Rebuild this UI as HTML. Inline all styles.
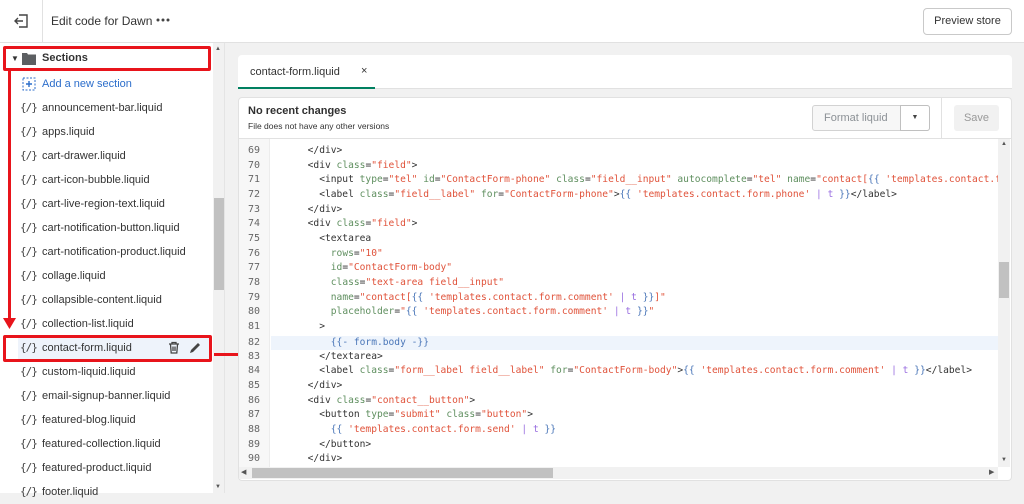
<!DOCTYPE html>
<html><head><meta charset="utf-8"><style>
*{margin:0;padding:0;box-sizing:border-box}
body{width:1024px;height:493px;overflow:hidden;background:#f1f1f1;font-family:"Liberation Sans",sans-serif;position:relative;color:#303030}
.a{position:absolute}
.top{left:0;top:0;width:1024px;height:43px;background:#fff;border-bottom:1px solid #e1e1e1}
.side{left:0;top:43px;width:213px;height:450px;background:#fff}
.sb{left:213px;top:43px;width:12px;height:450px;background:#f1f1f1;border-right:1px solid #e4e4e4}
.item{position:absolute;left:20px;font-size:11px;color:#333;height:24px;line-height:24px;white-space:nowrap}
.item i{font-style:normal;font-family:"DejaVu Sans Mono",monospace;font-size:11px;color:#444;display:inline-block;width:22px;letter-spacing:-1px}
.code{font-family:"DejaVu Sans Mono",monospace;font-size:10px;white-space:pre;color:#333}
.ln{position:absolute;left:238px;width:22px;text-align:right;color:#666;font-family:"DejaVu Sans Mono",monospace;font-size:10px}
.clip{position:absolute;left:271px;top:139px;width:727px;height:328px;overflow:hidden;font-size:9.6px}
.cl{position:absolute;left:2px;margin-top:-139px}
.g{color:#5f8f5f}.s{color:#e0533b}.p{color:#9a6fe0}.b{color:#4a76b8}
.red{border:3px solid #e8141b;border-radius:2px}
</style></head><body>
<div class="a top"></div>
<svg class="a" style="left:13px;top:13px" width="16" height="16" viewBox="0 0 16 16"><path d="M6 2H14V14H6M2 8H10M5 5L2 8L5 11" fill="none" stroke="#444" stroke-width="1.4"/></svg>
<div class="a" style="left:42px;top:0;width:1px;height:43px;background:#e1e1e1"></div>
<div class="a" style="left:51px;top:14px;font-size:12px;color:#333">Edit code for Dawn</div>
<svg class="a" style="left:156px;top:18px" width="14" height="4"><circle cx="2" cy="2" r="1.5" fill="#444"/><circle cx="7" cy="2" r="1.5" fill="#444"/><circle cx="12" cy="2" r="1.5" fill="#444"/></svg>
<div class="a" style="left:923px;top:8px;width:89px;height:27px;border:1px solid #c9c9c9;border-radius:4px;background:#fff;font-size:11px;text-align:center;line-height:25px;color:#333">Preview store</div>

<div class="a side"></div>
<div class="a sb"><div class="a" style="left:1px;top:155px;width:10px;height:92px;background:#c1c1c1"></div></div>
<div class="a" style="left:215px;top:46px;font-size:6px;color:#555">▲</div>
<div class="a" style="left:215px;top:484px;font-size:6px;color:#555">▼</div>

<div class="a" style="left:11px;top:54px;font-size:8px;color:#333">▼</div>
<svg class="a" style="left:22px;top:52px" width="14" height="13" viewBox="0 0 14 13"><path d="M0 1H5L6 2.5H14V13H0Z" fill="#5c5f62"/></svg>
<div class="a" style="left:42px;top:52px;font-size:11px;font-weight:bold;color:#333">Sections</div>
<div class="a red" style="left:3px;top:46px;width:208px;height:25px"></div>

<svg class="a" style="left:22px;top:77px" width="14" height="14"><rect x="1" y="1" width="12" height="12" fill="none" stroke="#2c6ecb" stroke-dasharray="2 1.5"/><path d="M7 4V10M4 7H10" stroke="#2c6ecb" stroke-width="1.4"/></svg>
<div class="a" style="left:42px;top:78px;font-size:11px;color:#2c6ecb">Add a new section</div>

<div class="a" style="left:18px;top:336px;width:193px;height:24px;background:#eef3fb"></div>
<div class="item" style="top:96px"><i>{/}</i>announcement-bar.liquid</div>
<div class="item" style="top:120px"><i>{/}</i>apps.liquid</div>
<div class="item" style="top:144px"><i>{/}</i>cart-drawer.liquid</div>
<div class="item" style="top:168px"><i>{/}</i>cart-icon-bubble.liquid</div>
<div class="item" style="top:192px"><i>{/}</i>cart-live-region-text.liquid</div>
<div class="item" style="top:216px"><i>{/}</i>cart-notification-button.liquid</div>
<div class="item" style="top:240px"><i>{/}</i>cart-notification-product.liquid</div>
<div class="item" style="top:264px"><i>{/}</i>collage.liquid</div>
<div class="item" style="top:288px"><i>{/}</i>collapsible-content.liquid</div>
<div class="item" style="top:312px"><i>{/}</i>collection-list.liquid</div>
<div class="item" style="top:336px"><i>{/}</i>contact-form.liquid</div>
<div class="item" style="top:360px"><i>{/}</i>custom-liquid.liquid</div>
<div class="item" style="top:384px"><i>{/}</i>email-signup-banner.liquid</div>
<div class="item" style="top:408px"><i>{/}</i>featured-blog.liquid</div>
<div class="item" style="top:432px"><i>{/}</i>featured-collection.liquid</div>
<div class="item" style="top:456px"><i>{/}</i>featured-product.liquid</div>
<div class="item" style="top:480px"><i>{/}</i>footer.liquid</div>
<svg class="a" style="left:167px;top:341px" width="36" height="14"><path d="M2 3H12M5 3V1.5H9V3M3.5 3.5L4.2 12H9.8L10.5 3.5M6 5.5V10M8 5.5V10" fill="none" stroke="#444" stroke-width="1.3"/><path d="M23 12L24 9L31 2L33 4L26 11Z" fill="#444"/></svg>
<div class="a red" style="left:3px;top:335px;width:209px;height:27px"></div>

<div class="a" style="left:8px;top:70px;width:3px;height:254px;background:#e8141b"></div>
<svg class="a" style="left:3px;top:318px" width="13" height="12"><path d="M0 0H13L6.5 11Z" fill="#e8141b"/></svg>
<div class="a" style="left:214px;top:353px;width:46px;height:3px;background:#e8141b"></div>
<svg class="a" style="left:258px;top:348px" width="12" height="13"><path d="M0 0L12 6.5L0 13Z" fill="#e8141b"/></svg>

<div class="a" style="left:238px;top:55px;width:774px;height:34px;background:#fff;border-radius:4px 4px 0 0;border-bottom:1px solid #e1e1e1"></div>
<div class="a" style="left:250px;top:66px;font-size:11px;color:#333">contact-form.liquid</div>
<div class="a" style="left:361px;top:65px;font-size:11px;color:#333">×</div>
<div class="a" style="left:238px;top:87px;width:137px;height:2px;background:#008060"></div>

<div class="a" style="left:238px;top:97px;width:774px;height:384px;background:#fff;border-radius:4px;border:1px solid #e1e1e1"></div>
<div class="a" style="left:248px;top:105px;font-size:11px;font-weight:bold;color:#303030">No recent changes</div>
<div class="a" style="left:248px;top:121px;font-size:8.5px;color:#333">File does not have any other versions</div>
<div class="a" style="left:812px;top:105px;width:118px;height:26px;border:1px solid #d2d2d2;border-radius:3px;background:#f7f7f7"></div>
<div class="a" style="left:900px;top:105px;width:30px;height:26px;border:1px solid #c0c0c0;border-radius:0 3px 3px 0;background:#fff;font-size:7px;text-align:center;line-height:24px;color:#444">▼</div>
<div class="a" style="left:824px;top:112px;font-size:11px;color:#8c9196">Format liquid</div>
<div class="a" style="left:941px;top:97px;width:1px;height:41px;background:#e1e1e1"></div>
<div class="a" style="left:954px;top:105px;width:45px;height:26px;border-radius:3px;background:#f1f1f1;font-size:11px;color:#999;text-align:center;line-height:26px">Save</div>
<div class="a" style="left:239px;top:138px;width:772px;height:1px;background:#e1e1e1"></div>

<div class="a" style="left:239px;top:139px;width:31px;height:328px;background:#f7f7f7;border-right:1px solid #ececec"></div>
<div class="a" style="left:271px;top:336px;width:727px;height:14px;background:#eef4fc"></div>
<div class="a" style="left:998px;top:139px;width:12px;height:328px;background:#f1f1f1"><div class="a" style="left:1px;top:123px;width:10px;height:36px;background:#c1c1c1"></div></div>
<div class="a" style="left:1001px;top:141px;font-size:6px;color:#555">▲</div>
<div class="a" style="left:1001px;top:457px;font-size:6px;color:#555">▼</div>
<div class="a" style="left:239px;top:467px;width:759px;height:12px;background:#f1f1f1"><div class="a" style="left:13px;top:1px;width:301px;height:10px;background:#c1c1c1"></div></div>
<div class="a" style="left:241px;top:468px;font-size:7px;color:#555">◀</div>
<div class="a" style="left:989px;top:468px;font-size:7px;color:#555">▶</div>

<div class="code">
<div class="ln" style="top:145px">69</div>
<div class="ln" style="top:160px">70</div>
<div class="ln" style="top:174px">71</div>
<div class="ln" style="top:189px">72</div>
<div class="ln" style="top:204px">73</div>
<div class="ln" style="top:218px">74</div>
<div class="ln" style="top:233px">75</div>
<div class="ln" style="top:248px">76</div>
<div class="ln" style="top:262px">77</div>
<div class="ln" style="top:277px">78</div>
<div class="ln" style="top:292px">79</div>
<div class="ln" style="top:306px">80</div>
<div class="ln" style="top:321px">81</div>
<div class="ln" style="top:337px">82</div>
<div class="ln" style="top:351px">83</div>
<div class="ln" style="top:365px">84</div>
<div class="ln" style="top:380px">85</div>
<div class="ln" style="top:395px">86</div>
<div class="ln" style="top:409px">87</div>
<div class="ln" style="top:424px">88</div>
<div class="ln" style="top:439px">89</div>
<div class="ln" style="top:453px">90</div>
<div class="clip">
<div class="cl" style="top:145px">      &lt;/div&gt;</div>
<div class="cl" style="top:160px">      &lt;div <span class="g">class</span>=<span class="s">"field"</span>&gt;</div>
<div class="cl" style="top:174px">        &lt;input <span class="g">type</span>=<span class="s">"tel"</span> <span class="g">id</span>=<span class="s">"ContactForm-phone"</span> <span class="g">class</span>=<span class="s">"field__input"</span> <span class="g">autocomplete</span>=<span class="s">"tel"</span> <span class="g">name</span>=<span class="s">"contact[<span class="b">{{</span> 'templates.contact.form.phone' | t }}]"</span></div>
<div class="cl" style="top:189px">        &lt;label <span class="g">class</span>=<span class="s">"field__label"</span> <span class="g">for</span>=<span class="s">"ContactForm-phone"</span>&gt;<span class="b">{{</span> <span class="s">'templates.contact.form.phone'</span> <span class="p">|</span> <span class="p">t</span> <span class="b">}}</span>&lt;/label&gt;</div>
<div class="cl" style="top:204px">      &lt;/div&gt;</div>
<div class="cl" style="top:218px">      &lt;div <span class="g">class</span>=<span class="s">"field"</span>&gt;</div>
<div class="cl" style="top:233px">        &lt;textarea</div>
<div class="cl" style="top:248px">          <span class="g">rows</span>=<span class="s">"10"</span></div>
<div class="cl" style="top:262px">          <span class="g">id</span>=<span class="s">"ContactForm-body"</span></div>
<div class="cl" style="top:277px">          <span class="g">class</span>=<span class="s">"text-area field__input"</span></div>
<div class="cl" style="top:292px">          <span class="g">name</span>=<span class="s">"contact[<span class="b">{{</span> 'templates.contact.form.comment' <span class="p">|</span> <span class="p">t</span> <span class="b">}}</span>]"</span></div>
<div class="cl" style="top:306px">          <span class="g">placeholder</span>=<span class="s">"<span class="b">{{</span> 'templates.contact.form.comment' <span class="p">|</span> <span class="p">t</span> <span class="b">}}</span>"</span></div>
<div class="cl" style="top:321px">        &gt;</div>
<div class="cl" style="top:337px">          <span class="b">{{-</span> <span class="b">form.body</span> <span class="b">-}}</span></div>
<div class="cl" style="top:351px">        &lt;/textarea&gt;</div>
<div class="cl" style="top:365px">        &lt;label <span class="g">class</span>=<span class="s">"form__label field__label"</span> <span class="g">for</span>=<span class="s">"ContactForm-body"</span>&gt;<span class="b">{{</span> <span class="s">'templates.contact.form.comment'</span> <span class="p">|</span> <span class="p">t</span> <span class="b">}}</span>&lt;/label&gt;</div>
<div class="cl" style="top:380px">      &lt;/div&gt;</div>
<div class="cl" style="top:395px">      &lt;div <span class="g">class</span>=<span class="s">"contact__button"</span>&gt;</div>
<div class="cl" style="top:409px">        &lt;button <span class="g">type</span>=<span class="s">"submit"</span> <span class="g">class</span>=<span class="s">"button"</span>&gt;</div>
<div class="cl" style="top:424px">          <span class="b">{{</span> <span class="s">'templates.contact.form.send'</span> <span class="p">|</span> <span class="p">t</span> <span class="b">}}</span></div>
<div class="cl" style="top:439px">        &lt;/button&gt;</div>
<div class="cl" style="top:453px">      &lt;/div&gt;</div>
</div>
</div>
</body></html>
